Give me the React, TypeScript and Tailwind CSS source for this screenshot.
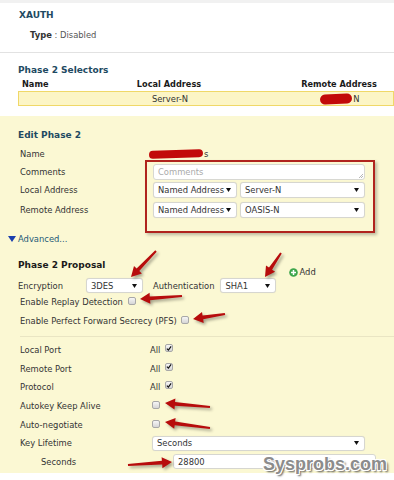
import React from "react";

const Tri = () => (
  <svg width="5" height="4" viewBox="0 0 5 4" className="shrink-0">
    <polygon points="0,0 5,0 2.5,4" fill="#111" />
  </svg>
);

const Select = ({ text, w, cls = "" }: { text: string; w: string; cls?: string }) => (
  <div
    className={`${w} ${cls} h-[15px] shrink-0 flex items-center justify-between bg-white border border-[#d6d6d0] rounded-[3px] pl-[4px] pr-[5px] text-[#333] shadow-[0_0_1px_rgba(0,0,0,0.1)]`}
  >
    <span>{text}</span>
    <Tri />
  </div>
);

const Box = ({ checked = false, cls = "" }: { checked?: boolean; cls?: string }) => (
  <div
    className={`${cls} w-[8px] h-[8px] shrink-0 rounded-[2px] border border-[#a8a8a8] bg-gradient-to-b from-[#f6f6f6] to-[#d6d6d6] flex items-center justify-center`}
  >
    {checked && (
      <svg width="7" height="7" viewBox="0 0 7 7">
        <path d="M1 3.6 L2.8 5.4 L6 1" stroke="#111" strokeWidth="1.4" fill="none" />
      </svg>
    )}
  </div>
);

function arrowPts(tx: number, ty: number, hx: number, hy: number) {
  const dx = hx - tx;
  const dy = hy - ty;
  const len = Math.hypot(dx, dy);
  const ux = dx / len;
  const uy = dy / len;
  const nx = -uy;
  const ny = ux;
  const L = 10;
  const W = 5.5;
  const bx = hx - ux * L;
  const by = hy - uy * L;
  const p = (x: number, y: number) => `${x.toFixed(1)},${y.toFixed(1)}`;
  return [
    p(tx + nx * 1, ty + ny * 1),
    p(bx + nx * 1.9, by + ny * 1.9),
    p(bx + nx * W, by + ny * W),
    p(hx, hy),
    p(bx - nx * W, by - ny * W),
    p(bx - nx * 1.9, by - ny * 1.9),
    p(tx - nx * 1, ty - ny * 1),
  ].join(" ");
}

const arrows: [number, number, number, number][] = [
  [156, 251, 131, 277],
  [281, 253, 265, 277],
  [182, 296, 140, 299],
  [225, 314, 193, 319],
  [210, 407, 165, 403],
  [210, 428, 165, 422],
  [128, 465, 172, 462],
];

const LRow = ({ label, children, pl = "pl-[20px]" }: { label: string; children?: React.ReactNode; pl?: string }) => (
  <div className="h-[18.6px] flex items-center">
    <div className={`w-[150px] shrink-0 ${pl}`}>{label}</div>
    <div className="flex items-center">{children}</div>
  </div>
);

export default function App() {
  return (
    <div
      className="relative w-[394px] h-[480px] overflow-hidden bg-white text-[8.4px] text-[#333] leading-[12px]"
      style={{ fontFamily: '"DejaVu Sans", Verdana, sans-serif' }}
    >
      <div className="h-[3px] bg-[#f1f1f1]" />
      <div className="h-[49px] pt-[6px]">
        <div className="h-[12px] pl-[19px] font-bold text-[9px] text-[#1e4a62]">XAUTH</div>
        <div className="h-[12px] mt-[8px] pl-[30px]">
          <span className="font-bold text-[#333]">Type</span>
          <span className="text-[#555]"> : Disabled</span>
        </div>
      </div>
      <div className="h-[1px] bg-[#e2e2e2]" />
      <div className="h-[63px] pt-[11px]">
        <div className="h-[12px] pl-[18px] font-bold text-[9px] text-[#1e4a62]">Phase 2 Selectors</div>
        <div className="h-[12px] mt-[2px] ml-[18px] grid grid-cols-[100px_102px_238px] font-bold text-[8.2px] text-[#1a1a1a]">
          <div className="pl-[4px]">Name</div>
          <div className="text-center">Local Address</div>
          <div className="text-center">Remote Address</div>
        </div>
        <div className="h-[15px] mt-[1px] ml-[18px] border border-[#f0d868] bg-[#fcf5c6] grid grid-cols-[100px_102px_238px] items-center">
          <div />
          <div className="text-center">Server-N</div>
          <div className="flex items-center justify-center">
            <span className="inline-block w-[32px] h-[10px] rounded-[5px] bg-[#c20a0a] -rotate-3" />
            <span className="ml-[1px]">N</span>
          </div>
        </div>
      </div>

      <div className="bg-[#fbf8d3] pt-[13px] pb-[2px]">
        <div className="h-[12px] pl-[18px] font-bold text-[9px] text-[#1e4a62]">Edit Phase 2</div>
        <div className="h-[12px] mt-[7px] flex items-center">
          <div className="w-[149px] shrink-0 pl-[20px]">Name</div>
          <span className="inline-block w-[54px] h-[8px] rounded-[4px] bg-[#c20a0a] rotate-[-2deg]" />
          <span className="ml-[1px]">s</span>
        </div>
        <div className="flex">
          <div className="w-[145px] shrink-0 pl-[20px] pt-[4px]">
            <div className="h-[16px] flex items-center">Comments</div>
            <div className="h-[16px] mt-[2px] flex items-center">Local Address</div>
            <div className="h-[16px] mt-[4px] flex items-center">Remote Address</div>
          </div>
          <div className="w-[230px] h-[73px] border-2 border-[#b0241e] pl-[6px] pt-[2px] shadow-[2px_2px_3px_rgba(0,0,0,0.25)]">
            <div className="relative w-[212px] h-[16px] bg-white border border-[#d8d8d2] rounded-[3px] pl-[4px] flex items-center text-[#aaa]">
              Comments
              <svg className="absolute right-[1px] bottom-[1px]" width="5" height="5" viewBox="0 0 5 5">
                <path d="M1 5 L5 1 M3 5 L5 3" stroke="#999" strokeWidth="0.7" />
              </svg>
            </div>
            <div className="flex mt-[2px] h-[16px]">
              <Select text="Named Address" w="w-[84px]" cls="h-[16px]" />
              <Select text="Server-N" w="w-[125px]" cls="ml-[3px] h-[16px]" />
            </div>
            <div className="flex mt-[4px] h-[16px]">
              <Select text="Named Address" w="w-[84px]" cls="h-[16px]" />
              <Select text="OASIS-N" w="w-[125px]" cls="ml-[3px] h-[16px]" />
            </div>
          </div>
        </div>
        <div className="h-[11px] pl-[8px] flex items-center">
          <svg width="8" height="6" viewBox="0 0 8 6">
            <polygon points="0,0 8,0 4,6" fill="#1b3fae" />
          </svg>
          <span className="ml-[2px] text-[#1e5a78]">Advanced...</span>
        </div>
        <div className="h-[12px] mt-[15px] pl-[18px] font-bold text-[9px] text-[#1a1a1a]">Phase 2 Proposal</div>
        <div className="h-[23px] flex items-end pb-[1px]">
          <div className="w-[86px] shrink-0 pl-[18px] h-[15px] flex items-center">Encryption</div>
          <Select text="3DES" w="w-[57px]" />
          <div className="ml-[10px] h-[15px] flex items-center">Authentication</div>
          <Select text="SHA1" w="w-[56px]" cls="ml-[6px]" />
          <div className="self-start -mt-[4px] ml-[13px] flex items-center h-[10px] text-[#333]">
            <svg width="9" height="9" viewBox="0 0 9 9">
              <circle cx="4.5" cy="4.5" r="4.3" fill="#3ea64c" />
              <path d="M4.5 2 V7 M2 4.5 H7" stroke="#fff" strokeWidth="1.5" />
            </svg>
            <span className="ml-[1px]">Add</span>
          </div>
        </div>
        <div className="h-[16px] pl-[20px] flex items-center">
          <span>Enable Replay Detection</span>
          <Box cls="ml-[5px] mb-[2px]" />
        </div>
        <div className="h-[16px] mt-[3px] pl-[20px] flex items-center">
          <span>Enable Perfect Forward Secrecy (PFS)</span>
          <Box cls="ml-[4px] mb-[2px]" />
        </div>
        <div className="mt-[7px] ml-[20px] h-[1px] bg-[#e9e5c3]" />
        <div className="pt-[4px]">
          <LRow label="Local Port">
            <span>All</span>
            <Box checked cls="ml-[5px] mb-[4px]" />
          </LRow>
          <LRow label="Remote Port">
            <span>All</span>
            <Box checked cls="ml-[5px] mb-[4px]" />
          </LRow>
          <LRow label="Protocol">
            <span>All</span>
            <Box checked cls="ml-[5px] mb-[4px]" />
          </LRow>
          <LRow label="Autokey Keep Alive">
            <Box cls="ml-[2px] mb-[2px]" />
          </LRow>
          <LRow label="Auto-negotiate">
            <Box cls="ml-[2px] mb-[2px]" />
          </LRow>
          <LRow label="Key Lifetime">
            <Select text="Seconds" w="w-[213px]" cls="ml-[2px]" />
          </LRow>
          <LRow label="Seconds" pl="pl-[41px]">
            <div className="ml-[23px] w-[203px] h-[15px] bg-white border border-[#d6d6d0] rounded-[3px] pl-[4px] flex items-center">
              28800
            </div>
          </LRow>
        </div>
      </div>

      <svg
        className="absolute top-0 left-0 pointer-events-none [filter:drop-shadow(2px_2px_1.5px_rgba(0,0,0,0.35))]"
        width="394"
        height="480"
        viewBox="0 0 394 480"
      >
        {arrows.map((a, i) => (
          <polygon key={i} points={arrowPts(a[0], a[1], a[2], a[3])} fill="#b70c0c" />
        ))}
      </svg>

      <div
        className="absolute left-[263px] top-[455px] text-[18px] leading-none font-bold text-[#8c8c8c] [text-shadow:1px_1px_0_#fff,-1px_-1px_0_#fff,1px_-1px_0_#fff,-1px_1px_0_#fff,2px_2px_2px_#555]"
        style={{ fontFamily: '"Liberation Sans", Arial, sans-serif' }}
      >
        Sysprobs.com
      </div>
    </div>
  );
}
